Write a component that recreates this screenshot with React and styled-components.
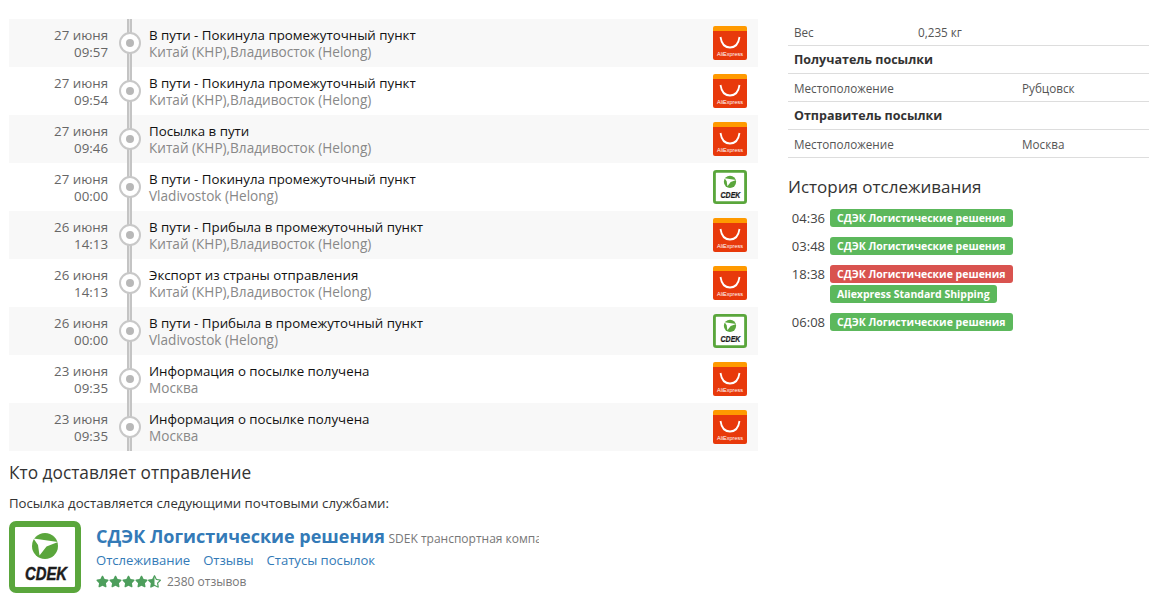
import React from "react";
import styled, { createGlobalStyle } from "styled-components";
import { FaStar, FaStarHalfAlt } from "react-icons/fa";

const events = [
  { date: "27 июня", time: "09:57", title: "В пути - Покинула промежуточный пункт", place: "Китай (КНР),Владивосток (Helong)", logo: "ali" },
  { date: "27 июня", time: "09:54", title: "В пути - Покинула промежуточный пункт", place: "Китай (КНР),Владивосток (Helong)", logo: "ali" },
  { date: "27 июня", time: "09:46", title: "Посылка в пути", place: "Китай (КНР),Владивосток (Helong)", logo: "ali" },
  { date: "27 июня", time: "00:00", title: "В пути - Покинула промежуточный пункт", place: "Vladivostok (Helong)", logo: "cdek" },
  { date: "26 июня", time: "14:13", title: "В пути - Прибыла в промежуточный пункт", place: "Китай (КНР),Владивосток (Helong)", logo: "ali" },
  { date: "26 июня", time: "14:13", title: "Экспорт из страны отправления", place: "Китай (КНР),Владивосток (Helong)", logo: "ali" },
  { date: "26 июня", time: "00:00", title: "В пути - Прибыла в промежуточный пункт", place: "Vladivostok (Helong)", logo: "cdek" },
  { date: "23 июня", time: "09:35", title: "Информация о посылке получена", place: "Москва", logo: "ali" },
  { date: "23 июня", time: "09:35", title: "Информация о посылке получена", place: "Москва", logo: "ali" },
];

const history = [
  { time: "04:36", labels: [{ text: "СДЭК Логистические решения" }] },
  { time: "03:48", labels: [{ text: "СДЭК Логистические решения" }] },
  { time: "18:38", labels: [{ text: "СДЭК Логистические решения", red: true }, { text: "Aliexpress Standard Shipping" }] },
  { time: "06:08", labels: [{ text: "СДЭК Логистические решения" }] },
];

const AliLogo = () => (
  <svg width="34" height="34" viewBox="0 0 34 34">
    <path d="M0 2a2 2 0 0 1 2-2h30a2 2 0 0 1 2 2v6H0z" fill="#ff9a00" />
    <path d="M0 5h34v27a2 2 0 0 1-2 2H2a2 2 0 0 1-2-2z" fill="#e8390b" />
    <path d="M7.500 11c1 7 4.500 10.500 9.500 10.500s8.500-3.500 9.500-10.500" fill="none" stroke="#fff" strokeWidth="1.800" />
    <text x="17" y="29.500" textAnchor="middle" fontSize="6" fill="#fff" fontFamily="Liberation Sans, sans-serif" textLength="26" lengthAdjust="spacingAndGlyphs">AliExpress</text>
  </svg>
);

const CdekLogo = ({ size }) => (
  <svg width={size} height={size} viewBox="0 0 72 72">
    <rect x="3" y="3" width="66" height="66" rx="4" fill="#fff" stroke="#5aa63c" strokeWidth="6" />
    <circle cx="36" cy="25" r="13" fill="#5aa63c" />
    <path d="M24.500 17.500L49 21l-11.500 4.500-7 9-1.500-10.500z" fill="#fff" />
    <text x="16" y="58.500" fontSize="18.500" fontWeight="700" fontStyle="italic" fill="#1c1c1c" stroke="#1c1c1c" strokeWidth="0.500" fontFamily="Liberation Sans, sans-serif" textLength="42" lengthAdjust="spacingAndGlyphs">CDEK</text>
  </svg>
);

const App = () => (
  <>
    <GlobalStyle />
    <Page>
      <Main>
        <Timeline>
          {events.map((e, i) => (
            <Row key={i} odd={i % 2 === 0}>
              <When>
                <span>{e.date}</span>
                <span>{e.time}</span>
              </When>
              <Track>
                <Dot />
              </Track>
              <Info>
                <Title>{e.title}</Title>
                <Place>{e.place}</Place>
              </Info>
              <Carrier>{e.logo === "ali" ? <AliLogo /> : <CdekLogo size={34} />}</Carrier>
            </Row>
          ))}
        </Timeline>
        <Heading>Кто доставляет отправление</Heading>
        <Lead>Посылка доставляется следующими почтовыми службами:</Lead>
        <Service>
          <CdekLogo size={72} />
          <ServiceBody>
            <ServiceTitle>
              <ServiceName>СДЭК Логистические решения</ServiceName> <ServiceNote>SDEK транспортная компания</ServiceNote>
            </ServiceTitle>
            <Links>
              <a>Отслеживание</a>
              <a>Отзывы</a>
              <a>Статусы посылок</a>
            </Links>
            <Rating>
              <Stars>
                <FaStar /><FaStar /><FaStar /><FaStar /><FaStarHalfAlt />
              </Stars>
              <span>2380 отзывов</span>
            </Rating>
          </ServiceBody>
        </Service>
      </Main>
      <Side>
        <InfoRow>
          <WeightLabel>Вес</WeightLabel>
          <span>0,235 кг</span>
        </InfoRow>
        <InfoRow><strong>Получатель посылки</strong></InfoRow>
        <InfoRow>
          <PlaceLabel>Местоположение</PlaceLabel>
          <span>Рубцовск</span>
        </InfoRow>
        <InfoRow><strong>Отправитель посылки</strong></InfoRow>
        <InfoRow>
          <PlaceLabel>Местоположение</PlaceLabel>
          <span>Москва</span>
        </InfoRow>
        <SideHeading>История отслеживания</SideHeading>
        {history.map((h, i) => (
          <HistoryRow key={i}>
            <HistoryTime>{h.time}</HistoryTime>
            <Labels>
              {h.labels.map((l, j) => (
                <Label key={j} red={l.red}>{l.text}</Label>
              ))}
            </Labels>
          </HistoryRow>
        ))}
      </Side>
    </Page>
  </>
);

const GlobalStyle = createGlobalStyle`
  html, body {
    margin: 0;
    height: 599px;
    overflow: hidden;
    background: #fff;
  }
  body {
    font-family: "Open Sans", "DejaVu Sans", sans-serif;
    font-size: 13.3px;
    color: #333;
  }
`;
const Page = styled.div`
  display: flex;
  align-items: flex-start;
  padding: 18px 0 0 9px;
`;
const Main = styled.div`
  width: 749px;
  flex: none;
  margin-top: 1px;
`;
const Timeline = styled.div``;
const Row = styled.div`
  display: flex;
  height: 48px;
  background: ${(props) => (props.odd ? "#f8f8f8" : "#fff")};
`;
const When = styled.div`
  width: 99px;
  padding-top: 8px;
  display: flex;
  flex-direction: column;
  align-items: flex-end;
  color: #666;
  line-height: 17px;
`;
const Track = styled.div`
  position: relative;
  width: 41px;
  &::before {
    content: "";
    position: absolute;
    top: 0;
    bottom: 0;
    left: 19px;
    width: 5px;
    background: linear-gradient(90deg, #c4c4c4 0 2px, #e2e2e2 2px 3px, #c4c4c4 3px 5px);
  }
`;
const Dot = styled.div`
  position: relative;
  box-sizing: border-box;
  width: 22px;
  height: 22px;
  margin: 13px 0 0 11px;
  border: 2px solid #c8c8c8;
  border-radius: 50%;
  background: #fff;
  &::after {
    content: "";
    position: absolute;
    top: 5px;
    left: 5px;
    width: 8px;
    height: 8px;
    border-radius: 50%;
    background: #b8b8b8;
  }
`;
const Info = styled.div`
  flex: 1;
  padding-top: 8px;
`;
const Title = styled.div`
  color: #111;
  line-height: 17px;
`;
const Place = styled.div`
  color: #888;
  font-size: 13.6px;
  line-height: 16px;
`;
const Carrier = styled.div`
  width: 45px;
  flex: none;
  padding-top: 7px;
`;
const Heading = styled.div`
  margin-top: 11px;
  font-size: 17.3px;
  line-height: 22px;
  color: #333;
`;
const Lead = styled.div`
  margin-top: 11px;
  font-size: 13.2px;
  line-height: 17px;
  color: #333;
`;
const Service = styled.div`
  display: flex;
  gap: 15px;
  margin-top: 9px;
`;
const ServiceBody = styled.div`
  width: 443px;
`;
const ServiceTitle = styled.div`
  white-space: nowrap;
  overflow: hidden;
  margin-top: 3px;
  line-height: 24px;
`;
const ServiceName = styled.span`
  font-size: 18px;
  font-weight: 700;
  color: #337ab7;
`;
const ServiceNote = styled.span`
  font-size: 12px;
  color: #777;
`;
const Links = styled.div`
  display: flex;
  gap: 13px;
  margin-top: -1px;
  font-size: 13.1px;
  line-height: 20px;
  color: #337ab7;
`;
const Rating = styled.div`
  display: flex;
  align-items: center;
  gap: 6px;
  margin-top: 3px;
  font-size: 12px;
  color: #777;
`;
const Stars = styled.div`
  display: flex;
  color: #4d9e5c;
  font-size: 13px;
`;
const Side = styled.div`
  width: 361px;
  margin-left: 30px;
  flex: none;
  font-size: 11.7px;
`;
const InfoRow = styled.div`
  display: flex;
  height: 28px;
  box-sizing: border-box;
  align-items: center;
  padding-left: 6px;
  border-bottom: 1px solid #ddd;
  color: #555;
  strong {
    font-size: 12.5px;
    color: #333;
  }
`;
const WeightLabel = styled.span`
  width: 124px;
`;
const PlaceLabel = styled.span`
  width: 228px;
`;
const SideHeading = styled.div`
  margin: 17px 0 10px;
  font-size: 17px;
  line-height: 24px;
  color: #333;
`;
const HistoryRow = styled.div`
  display: flex;
  gap: 5px;
  margin-bottom: 10px;
`;
const HistoryTime = styled.div`
  width: 37px;
  text-align: right;
  font-size: 13px;
  line-height: 18px;
  color: #444;
`;
const Labels = styled.div`
  display: flex;
  flex-direction: column;
  align-items: flex-start;
  gap: 2px;
`;
const Label = styled.div`
  height: 18px;
  line-height: 18px;
  padding: 0 7px;
  border-radius: 3px;
  font-size: 10.5px;
  font-weight: 700;
  color: #fff;
  background: ${(props) => (props.red ? "#d9534f" : "#5cb85c")};
`;

export default App;
